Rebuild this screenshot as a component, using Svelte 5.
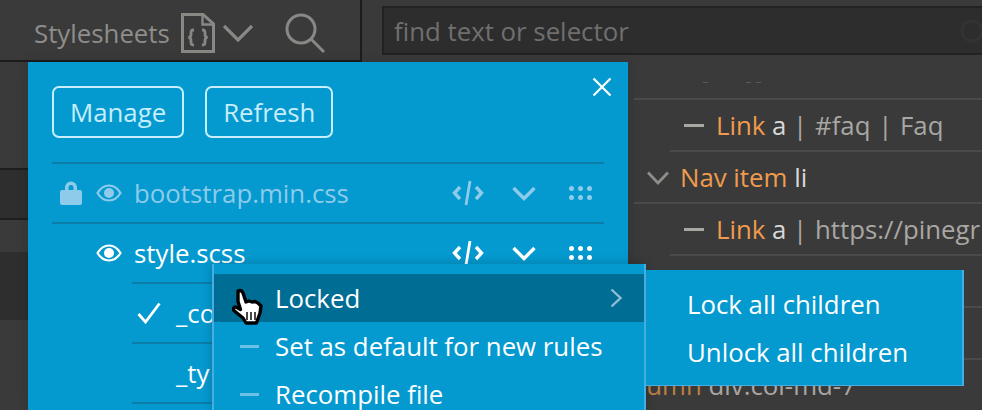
<script>
	const files = [
		{ name: 'bootstrap.min.css', locked: true, dim: true },
		{ name: 'style.scss', locked: false, dim: false }
	];
	const partials = [
		{ name: '_co', checked: true },
		{ name: '_ty', checked: false },
		{ name: '_la', checked: false }
	];
	const menu = [
		{ label: 'Locked', active: true },
		{ label: 'Set as default for new rules' },
		{ label: 'Recompile file' }
	];
</script>

<div class="app">
	<aside class="side">
		<header class="side-head">
			<span class="title">Stylesheets</span>
			<svg class="file-icon" width="34" height="40" viewBox="0 0 34 40" fill="none" stroke="#8a8885" stroke-width="3">
				<path d="M1.500 1.500H22L32.500 11V38.500H1.500Z" />
				<path d="M21.500 2V11.500H32" stroke-width="2.400" />
				<path d="M13 17c-3 0-3 1-3 3.500s0 3.500-2.500 4c2.500.5 2.500 1.500 2.500 4s0 3.500 3 3.500M21 17c3 0 3 1 3 3.500s0 3.500 2.500 4c-2.500.5-2.500 1.500-2.500 4s0 3.500-3 3.500" stroke="#8a8885" stroke-width="2.800" />
			</svg>
			<svg class="chev" width="30" height="18" viewBox="0 0 30 18" fill="none" stroke="#8a8885" stroke-width="3.200"><path d="M1 2 15 16 29 2" /></svg>
			<svg class="search" width="40" height="40" viewBox="0 0 40 40" fill="none" stroke="#8a8885" stroke-width="3"><circle cx="16" cy="16" r="14" /><path d="M26 26 39 39" /></svg>
		</header>
		<div class="side-rows">
			<div class="srow h1"></div>
			<div class="srow h2"></div>
			<div class="srow h3"></div>
			<div class="srow h4"></div>
			<div class="srow h5"></div>
		</div>
	</aside>

	<main class="pane">
		<div class="find-bar">
			<div class="find">
				<span>find text or selector</span>
				<svg class="clear" width="24" height="24" viewBox="0 0 24 24" fill="none" stroke="#333" stroke-width="3"><circle cx="12" cy="12" r="10" /></svg>
			</div>
		</div>
		<div class="tree">
			<div class="node first"><span class="ticks"><s></s><s></s><s></s></span></div>
			<div class="node inset">
				<span class="dash"></span><span><b>Link</b> <i>a</i> <em>| #faq | Faq</em></span>
			</div>
			<div class="node">
				<svg class="tog" width="22" height="14" viewBox="0 0 22 14" fill="none" stroke="#8f8d8a" stroke-width="2.800"><path d="M1 1.500 11 12 21 1.500" /></svg>
				<span><b>Nav item</b> <i>li</i></span>
			</div>
			<div class="node inset">
				<span class="dash"></span><span><b>Link</b> <i>a</i> <em>| https://pinegr</em></span>
			</div>
			<div class="node"></div>
			<div class="node"></div>
			<div class="node column"><span><b>Column</b> <em>div.col-md-7</em></span></div>
		</div>
	</main>

	<section class="panel">
		<svg class="close" width="20" height="20" viewBox="0 0 20 20" stroke="#fff" stroke-width="2.200"><path d="M1.500 1.500 18.500 18.500M18.500 1.500 1.500 18.500" /></svg>
		<div class="actions">
			<button>Manage</button>
			<button>Refresh</button>
		</div>
		{#each files as f}
			<div class="file" class:dim={f.dim}>
				<span class="lock">
					{#if f.locked}
						<svg width="22" height="24" viewBox="0 0 22 24"><path fill="#8ecbea" d="M5 9V6.500a6 6 0 0 1 12 0V9h3a2 2 0 0 1 2 2v11a2 2 0 0 1-2 2H2a2 2 0 0 1-2-2V11a2 2 0 0 1 2-2Zm3.500 0h5V6.500a2.500 2.500 0 0 0-5 0Z" /></svg>
					{/if}
				</span>
				<svg class="eye" width="26" height="18" viewBox="0 0 26 18"><path fill="none" stroke="currentColor" stroke-width="2.200" d="M1.500 9C4.500 4 8 1.500 13 1.500S21.500 4 24.500 9c-3 5-6.500 7.500-11.500 7.500S4.500 14 1.500 9Z" /><circle cx="13" cy="9" r="5" fill="currentColor" /></svg>
				<span class="fname">{f.name}</span>
				<span class="tools">
					<svg class="code" width="32" height="26" viewBox="0 0 32 26" fill="none" stroke="currentColor" stroke-width="3.400"><path d="M8 7 2.500 13 8 19M24 7l5.500 6-5.500 6" /><path d="M18 1l-4 24" stroke-width="2.800" /></svg>
					<svg class="down" width="24" height="15" viewBox="0 0 24 15" fill="none" stroke="currentColor" stroke-width="3.400"><path d="M1.500 2 12 12.500 22.500 2" /></svg>
					<svg class="grip" width="23" height="14" viewBox="0 0 23 14" fill="currentColor"><circle cx="2.500" cy="2.500" r="2.500" /><circle cx="11.500" cy="2.500" r="2.500" /><circle cx="20.500" cy="2.500" r="2.500" /><circle cx="2.500" cy="11.500" r="2.500" /><circle cx="11.500" cy="11.500" r="2.500" /><circle cx="20.500" cy="11.500" r="2.500" /></svg>
				</span>
			</div>
		{/each}
		{#each partials as p}
			<div class="partial">
				<span class="check">
					{#if p.checked}
						<svg width="24" height="22" viewBox="0 0 24 22" fill="none" stroke="#fff" stroke-width="2.800"><path d="M1.500 12 8.500 20 22.500 1.500" /></svg>
					{/if}
				</span>
				<span>{p.name}</span>
			</div>
		{/each}
	</section>

	<nav class="ctx">
		{#each menu as m}
			<div class="ctx-item" class:active={m.active}>
				<span class="ctx-dash" class:hide={m.active}></span>
				<span class="ctx-label">{m.label}</span>
				{#if m.active}
					<svg class="arrow" width="12" height="20" viewBox="0 0 12 20" fill="none" stroke="#8fbdd3" stroke-width="2.400"><path d="M1.500 1.500 10.500 10 1.500 18.500" /></svg>
				{/if}
			</div>
		{/each}
	</nav>

	<nav class="sub">
		<div>Lock all children</div>
		<div>Unlock all children</div>
	</nav>

	<svg class="cursor" width="32" height="40" viewBox="0 0 32 40">
		<path fill="#fff" stroke="#000" stroke-width="3.400" stroke-linejoin="round" d="M6 3c2.500-1 4 0 5 2l3 9 3-1 3 1 3-.5 3 1.500 3 3-1 7-2.500 7-1 3H14l-3-5-8.500-7c-2-2-1-5 2.500-3.500l3.500 2-2.500-8Z" />
		<path stroke="#333" stroke-width="1.800" d="M15 24v8M19 24v8M23 24v8" />
	</svg>
</div>

<style>
	:global(body) {
		margin: 0;
		background: #3a3a3a;
	}
	.app {
		position: relative;
		display: flex;
		width: 982px;
		height: 410px;
		overflow: hidden;
		font-family: 'Open Sans', 'Noto Sans', sans-serif;
		font-size: 25.8px;
		color: #fff;
		background: #3a3a3a;
	}
	.side {
		flex: 0 0 362px;
		box-sizing: border-box;
		border-right: 2px solid #1c1c1c;
	}
	.side-head {
		display: flex;
		align-items: center;
		height: 62px;
		padding: 6px 0 0 34px;
		box-sizing: border-box;
		border-bottom: 2px solid #1c1c1c;
		color: #8f8d8a;
	}
	.title {
		margin-right: 11px;
	}
	.file-icon {
		margin-right: 8px;
	}
	.chev {
		margin-right: 32px;
	}
	.srow {
		box-sizing: border-box;
	}
	.h1 {
		height: 108px;
		border-bottom: 2px solid #1e1e1e;
	}
	.h2 {
		height: 50px;
		background: #2e2e2e;
		border-bottom: 2px solid #1e1e1e;
	}
	.h3 {
		height: 32px;
	}
	.h4 {
		height: 68px;
		background: #2e2e2e;
	}
	.h5 {
		height: 90px;
	}
	.pane {
		flex: 1;
		min-width: 0;
	}
	.find-bar {
		height: 56px;
		padding: 6px 0 0 20px;
		box-sizing: border-box;
	}
	.find {
		display: flex;
		align-items: center;
		height: 49px;
		box-sizing: border-box;
		border: 2px solid #222;
		border-right: 0;
		background: #2d2d2d;
		color: #6f6f6f;
		padding-left: 10px;
		white-space: nowrap;
	}
	.clear {
		margin-left: auto;
		margin-right: -2px;
	}
	.tree {
		margin-left: 272px;
	}
	.node {
		display: flex;
		align-items: center;
		height: 50px;
		border-bottom: 2px solid #4b4b4b;
		color: #a9a7a4;
		white-space: nowrap;
		overflow: hidden;
	}
	.node.first {
		height: 42px;
		align-items: flex-start;
	}
	.ticks {
		display: flex;
		margin: 26px 0 0 69px;
	}
	.ticks s {
		width: 5px;
		height: 1px;
		background: #5a5a5a;
	}
	.ticks s:nth-child(2) {
		margin-left: 38px;
	}
	.ticks s:nth-child(3) {
		margin-left: 5px;
	}
	.node b {
		font-weight: 400;
		color: #ef9b4e;
	}
	.node i {
		font-style: normal;
		color: #d8d8d8;
	}
	.node em {
		font-style: normal;
		word-spacing: 1px;
	}
	.inset {
		margin-left: 36px;
	}
	.tog {
		margin: 2px 11px 0 13px;
	}
	.dash {
		flex: none;
		width: 20px;
		height: 3px;
		margin: 0 12px 0 14px;
		background: #a9a7a4;
	}
	.column {
		margin-left: -26px;
		border-bottom: 0;
	}
	.column b {
		color: #b97f45;
	}
	.panel {
		position: absolute;
		left: 28px;
		top: 62px;
		width: 600px;
		height: 348px;
		padding: 24px 24px 0 24px;
		box-sizing: border-box;
		background: #0499cf;
		box-shadow: 0 0 12px rgba(0, 0, 0, 0.15);
	}
	.close {
		position: absolute;
		right: 16px;
		top: 15px;
	}
	.actions {
		display: flex;
		gap: 21px;
		margin-bottom: 24px;
	}
	.actions button {
		height: 52px;
		padding: 0 16px;
		border: 2px solid #c6eefc;
		border-radius: 7px;
		background: none;
		color: #c6eefc;
		font: inherit;
	}
	.file {
		display: flex;
		align-items: center;
		height: 58px;
		border-top: 2px solid #0a7ea8;
		color: #fff;
	}
	.file.dim {
		color: #8ecbea;
	}
	.fname {
		line-height: 56px;
	}
	.lock {
		width: 44px;
		padding-left: 8px;
		box-sizing: border-box;
		display: flex;
	}
	.eye {
		margin-right: 12px;
	}
	.tools {
		margin-left: auto;
		display: flex;
		align-items: center;
		padding-right: 12px;
	}
	.code {
		margin-right: 28px;
	}
	.down {
		margin-right: 33px;
	}
	.partial {
		display: flex;
		align-items: center;
		height: 58px;
		margin-left: 80px;
		border-top: 2px solid #0a7ea8;
		white-space: nowrap;
	}
	.check {
		flex: none;
		width: 44px;
		padding-left: 5px;
		box-sizing: border-box;
		display: flex;
	}
	.ctx {
		position: absolute;
		left: 212px;
		top: 264px;
		width: 434px;
		height: 146px;
		padding-top: 10px;
		box-sizing: border-box;
		background: #0499cf;
		border-left: 2px solid #45ade0;
		border-right: 2px solid #45ade0;
		box-shadow: 0 0 10px rgba(0, 0, 0, 0.2);
	}
	.ctx-item {
		display: flex;
		align-items: center;
		height: 48px;
		padding-left: 26px;
		white-space: nowrap;
	}
	.ctx-item.active {
		background: #006d95;
	}
	.ctx-dash {
		width: 19px;
		height: 3px;
		margin-right: 16px;
		background: #6cc1e6;
	}
	.ctx-dash.hide {
		background: none;
	}
	.arrow {
		margin-left: auto;
		margin-right: 22px;
	}
	.sub {
		position: absolute;
		left: 646px;
		top: 270px;
		width: 318px;
		height: 116px;
		padding: 10px 0 0 41px;
		box-sizing: border-box;
		background: #0499cf;
		border-right: 2px solid #45ade0;
		border-bottom: 1px solid #45ade0;
	}
	.sub div {
		height: 48px;
		line-height: 48px;
	}
	.cursor {
		position: absolute;
		left: 232px;
		top: 288px;
		filter: blur(0.5px);
	}
</style>
